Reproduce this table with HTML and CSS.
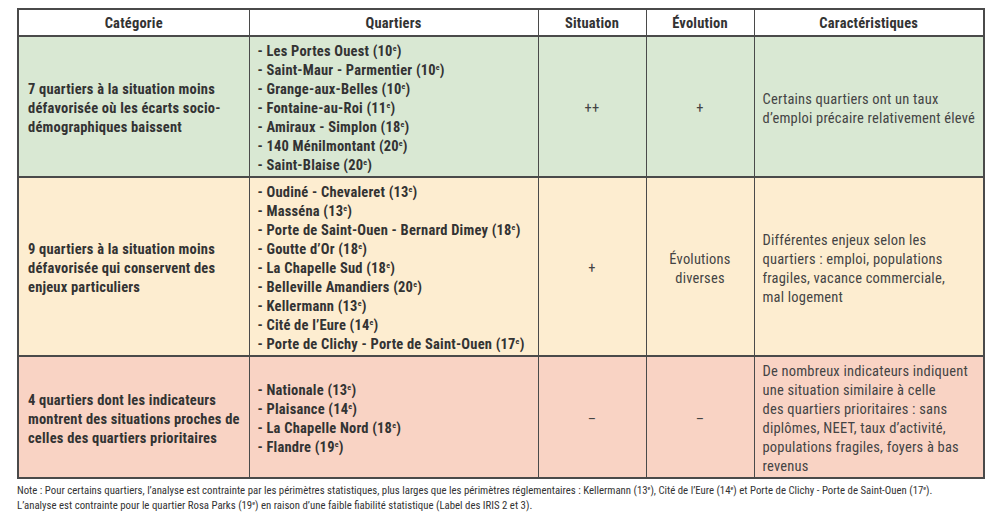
FILE: index.html
```html
<!DOCTYPE html>
<html lang="fr">
<head>
<meta charset="utf-8">
<link rel="stylesheet" href="styles.css">
</head>
<body>
<table class="grid">
  <colgroup>
    <col class="c-cat"><col class="c-qrt"><col class="c-sit"><col class="c-evo"><col class="c-car">
  </colgroup>
  <thead>
    <tr class="head">
      <th>Catégorie</th><th>Quartiers</th><th>Situation</th><th>Évolution</th><th>Caractéristiques</th>
    </tr>
  </thead>
  <tbody>
    <tr class="green">
      <td class="cat">7 quartiers à la situation moins défavorisée où les écarts socio-démographiques baissent</td>
      <td class="qrt">
        <div>- Les Portes Ouest (10<sup>e</sup>)</div>
        <div>- Saint-Maur - Parmentier (10<sup>e</sup>)</div>
        <div>- Grange-aux-Belles (10<sup>e</sup>)</div>
        <div>- Fontaine-au-Roi (11<sup>e</sup>)</div>
        <div>- Amiraux - Simplon (18<sup>e</sup>)</div>
        <div>- 140 Ménilmontant (20<sup>e</sup>)</div>
        <div>- Saint-Blaise (20<sup>e</sup>)</div>
      </td>
      <td class="mid">++</td>
      <td class="mid">+</td>
      <td class="car">Certains quartiers ont un taux d’emploi précaire relativement élevé</td>
    </tr>
    <tr class="amber">
      <td class="cat">9 quartiers à la situation moins défavorisée qui conservent des enjeux particuliers</td>
      <td class="qrt">
        <div>- Oudiné - Chevaleret (13<sup>e</sup>)</div>
        <div>- Masséna (13<sup>e</sup>)</div>
        <div>- Porte de Saint-Ouen - Bernard Dimey (18<sup>e</sup>)</div>
        <div>- Goutte d’Or (18<sup>e</sup>)</div>
        <div>- La Chapelle Sud (18<sup>e</sup>)</div>
        <div>- Belleville Amandiers (20<sup>e</sup>)</div>
        <div>- Kellermann (13<sup>e</sup>)</div>
        <div>- Cité de l’Eure (14<sup>e</sup>)</div>
        <div>- Porte de Clichy - Porte de Saint-Ouen (17<sup>e</sup>)</div>
      </td>
      <td class="mid">+</td>
      <td class="mid">Évolutions<br>diverses</td>
      <td class="car">Différentes enjeux selon les quartiers : emploi, populations fragiles, vacance commerciale,<br>mal logement</td>
    </tr>
    <tr class="rose">
      <td class="cat">4 quartiers dont les indicateurs montrent des situations proches de celles des quartiers prioritaires</td>
      <td class="qrt">
        <div>- Nationale (13<sup>e</sup>)</div>
        <div>- Plaisance (14<sup>e</sup>)</div>
        <div>- La Chapelle Nord (18<sup>e</sup>)</div>
        <div>- Flandre (19<sup>e</sup>)</div>
      </td>
      <td class="mid">–</td>
      <td class="mid">–</td>
      <td class="car">De nombreux indicateurs indiquent une situation similaire à celle<br>des quartiers prioritaires : sans diplômes, NEET, taux d’activité, populations fragiles, foyers à bas revenus</td>
    </tr>
  </tbody>
</table>
<p class="note">Note : Pour certains quartiers, l’analyse est contrainte par les périmètres statistiques, plus larges que les périmètres réglementaires : Kellermann (13<sup>e</sup>), Cité de l’Eure (14<sup>e</sup>) et Porte de Clichy - Porte de Saint-Ouen (17<sup>e</sup>).<br>L’analyse est contrainte pour le quartier Rosa Parks (19<sup>e</sup>) en raison d’une faible fiabilité statistique (Label des IRIS 2 et 3).</p>
</body>
</html>
```
FILE: styles.css
```css
html, body {
  margin: 0;
  padding: 0;
  background: #ffffff;
}
body {
  padding: 8px 0 0 17px;
  font-family: "Roboto Condensed", Roboto, "DejaVu Sans Condensed", sans-serif;
  font-stretch: condensed;
  color: #333333;
}
.grid {
  border-collapse: collapse;
  width: 966px;
  table-layout: fixed;
  font-size: 14.5px;
  letter-spacing: 0.2px;
  border: 2px solid #4a4a4a;
}
.c-cat { width: 231px; }
.c-qrt { width: 289px; }
.c-sit { width: 108px; }
.c-evo { width: 108px; }
.c-car { width: 230px; }
.grid th, .grid td {
  border-left: 1.5px solid #4a4a4a;
  border-right: 1.5px solid #4a4a4a;
  border-top: 2px solid #4a4a4a;
  border-bottom: 2px solid #4a4a4a;
  vertical-align: middle;
}
.grid th {
  height: 22px;
  padding: 3px 0 0;
  line-height: 22px;
  font-weight: 700;
  text-align: center;
  color: #333333;
  background: #ffffff;
}
.grid td {
  padding: 5px 8px 1px;
  line-height: 19px;
}
.green td { background: #d9e8d3; }
.amber td { background: #fdedd0; }
.rose td { background: #f9d3c4; }
.cat {
  font-weight: 700;
  padding-left: 9px !important;
}
.qrt {
  font-weight: 700;
}
.mid {
  text-align: center;
  color: #444444;
}
.car {
  color: #444444;
}
sup {
  font-size: 0.55em;
  line-height: 0;
  vertical-align: 0.6em;
}
.note {
  margin: 4px 0 0 0;
  font-size: 10.8px;
  line-height: 15px;
  color: #333333;
}
```
